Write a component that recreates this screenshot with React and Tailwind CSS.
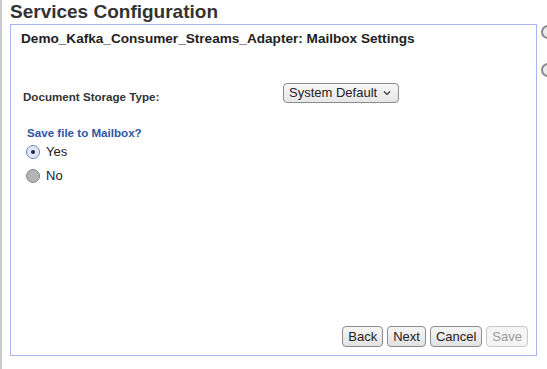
import React from 'react';

const font = { fontFamily: '"Liberation Sans", Arial, sans-serif' };

function Radio({ checked, label }) {
  return (
    <label className="flex items-center h-[16px] gap-[6px] text-[13px] text-[#222]">
      {checked ? (
        <span className="w-[14px] h-[14px] rounded-full border border-[#6f86c4] bg-[#dfe7f7] flex items-center justify-center">
          <span className="w-[4px] h-[4px] rounded-full bg-[#1e2a44]" />
        </span>
      ) : (
        <span className="w-[14px] h-[14px] rounded-full border border-[#888] bg-[#b4b4b4]" />
      )}
      <span>{label}</span>
    </label>
  );
}

function Btn({ children, disabled }) {
  return (
    <button
      className={
        disabled
          ? 'h-[21px] px-[5px] rounded-[4px] border border-[#c8c8c8] bg-[#f4f4f4] text-[#9a9a9a] text-[13px] leading-none'
          : 'h-[21px] px-[5px] rounded-[4px] border border-[#8c8c8c] bg-gradient-to-b from-[#f6f6f6] to-[#e2e2e2] text-[#222] text-[13px] leading-none'
      }
    >
      {children}
    </button>
  );
}

export default function App() {
  return (
    <div
      style={font}
      className="w-[547px] h-[369px] overflow-hidden bg-white flex border-l-2 border-[#cbcbcb]"
    >
      {/* main column */}
      <div className="pl-[8px] flex flex-col">
        <h1 className="text-[19px] leading-[22px] font-bold text-[#333] mt-[1px] h-[23px]">
          Services Configuration
        </h1>

        <div className="w-[527px] h-[332px] border border-[#a9b6ea] flex flex-col">
          <div className="pl-[10px] pt-[5px] text-[13.6px] leading-[17px] font-bold text-[#222]">
            Demo_Kafka_Consumer_Streams_Adapter: Mailbox Settings
          </div>

          <div className="flex mt-[36px] pl-[12px]">
            <div className="w-[260px] pt-[6px] text-[11.6px] leading-[16px] font-bold text-[#333]">
              Document Storage Type:
            </div>
            <div className="h-[20px] w-[116px] rounded-[4px] border border-[#8c8c8c] bg-gradient-to-b from-[#f7f7f7] to-[#e6e6e6] flex items-center pl-[5px] gap-[6px] text-[13px] text-[#222]">
              <span>System Default</span>
              <svg width="8" height="6" viewBox="0 0 8 6">
                <path d="M1 1.5 L4 4.5 L7 1.5" fill="none" stroke="#333" strokeWidth="1.2" />
              </svg>
            </div>
          </div>

          <div className="mt-[20px] pl-[16px] text-[11.6px] leading-[16px] font-bold text-[#2c57a3]">
            Save file to Mailbox?
          </div>

          <div className="pl-[15px] mt-[3px] flex flex-col gap-[8px]">
            <Radio checked label="Yes" />
            <Radio label="No" />
          </div>

          <div className="flex-1" />

          <div className="flex justify-end gap-[4px] pr-[8px] pb-[8px]">
            <Btn>Back</Btn>
            <Btn>Next</Btn>
            <Btn>Cancel</Btn>
            <Btn disabled>Save</Btn>
          </div>
        </div>
      </div>

      {/* clipped controls on the right */}
      <div className="pl-[4px] pt-[25px] flex flex-col gap-[24px] shrink-0">
        <span className="w-[14px] h-[14px] rounded-full border-2 border-[#8a8a8a] bg-[#ececec]" />
        <span className="w-[14px] h-[14px] rounded-full border-2 border-[#8a8a8a] bg-[#ececec]" />
      </div>
    </div>
  );
}
